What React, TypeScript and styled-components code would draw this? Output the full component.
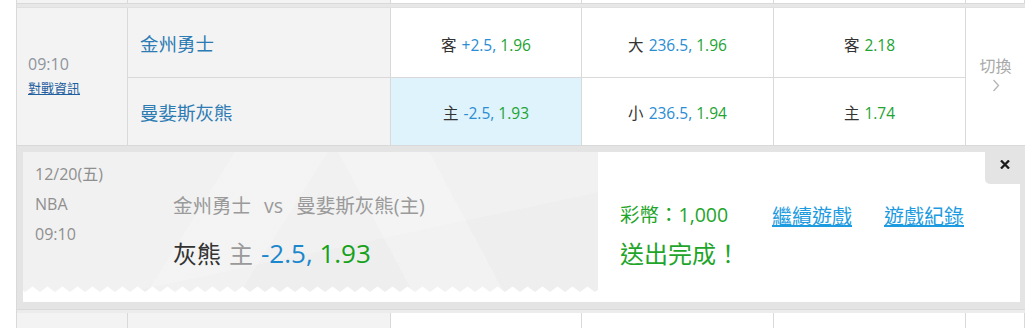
import React from "react";
import styled, { createGlobalStyle } from "styled-components";

const GlobalStyle = createGlobalStyle`
  html, body { margin: 0; padding: 0; background: #fff; overflow: hidden; }
  body { font-family: "Open Sans", "Noto Sans CJK TC", sans-serif; }
`;

const BORDER = "#d9d9d9";

const Page = styled.div`
  margin-left: 16px;
  width: 1009px;
  box-sizing: border-box;
  border-left: 1px solid ${BORDER};
`;

const Grid = styled.div<{ $rows: string }>`
  display: grid;
  grid-template-columns: 111px 263px 191px 192px 192px 1fr;
  grid-template-rows: ${(p) => p.$rows};
`;

const Cell = styled.div<{ $gray?: boolean; $noBottom?: boolean }>`
  box-sizing: border-box;
  background: ${(p) => (p.$gray ? "#f3f3f3" : "#fff")};
  border-right: 1px solid ${BORDER};
  border-bottom: ${(p) => (p.$noBottom ? "none" : `1px solid ${BORDER}`)};
`;

const Band = styled.div<{ $tone: string; $h: number }>`
  height: ${(p) => p.$h}px;
  background: ${(p) => p.$tone};
  border-top: 1px solid ${BORDER};
`;

const TimeCell = styled(Cell)`
  grid-row: span 2;
  display: flex;
  flex-direction: column;
  justify-content: center;
  padding-left: 11px;
  padding-bottom: 3px;
`;

const Time = styled.div`
  font-size: 16px;
  line-height: 20px;
  color: #8e959c;
`;

const InfoLink = styled.a`
  margin-top: 5px;
  font-size: 13px;
  line-height: 18px;
  color: #1f5f9e;
  text-decoration: underline;
  cursor: pointer;
  width: max-content;
`;

const TeamCell = styled(Cell)`
  display: flex;
  align-items: center;
  padding-left: 12px;
  font-size: 18.5px;
  color: #2d7bb3;
`;

const OddsCell = styled(Cell)<{ $selected?: boolean; $pad: number }>`
  display: flex;
  align-items: center;
  justify-content: center;
  padding-top: ${(p) => p.$pad}px;
  font-size: 15.5px;
  background: ${(p) => (p.$selected ? "#def3fc" : "#fff")};
`;

const Label = styled.span`
  color: #333;
  margin-right: 5px;
`;

const Blue = styled.span`
  color: #2a8dd4;
`;

const Green = styled.span`
  color: #22a332;
`;

const SwitchCell = styled(Cell)`
  grid-row: span 2;
  border-right: none;
  display: flex;
  flex-direction: column;
  align-items: center;
  justify-content: center;
  color: #a9a9a9;
  font-size: 16px;
  line-height: 22px;
  gap: 2px;
  padding-bottom: 6px;
`;

const Frame = styled.div`
  background: #e4e4e4;
  padding: 6px 5px 7px 6px;
`;

const Inner = styled.div`
  position: relative;
  background: #fff;
  height: 150px;
  display: flex;
  align-items: flex-start;
`;

const Ticket = styled.div`
  width: 575px;
  height: 140px;
  display: flex;
  flex-direction: column;
  background-color: #f1f1f1;
  background-image:
    linear-gradient(122deg, rgba(255,255,255,0) 0 32%, rgba(255,255,255,0.18) 32% 46%, rgba(255,255,255,0) 46%),
    linear-gradient(62deg, rgba(0,0,0,0) 0 60%, rgba(255,255,255,0.22) 60% 74%, rgba(0,0,0,0) 74%),
    linear-gradient(168deg, rgba(0,0,0,0) 0 62%, rgba(0,0,0,0.012) 62%);
`;

const TicketBody = styled.div`
  flex: 1;
  display: flex;
`;

const MetaCol = styled.div`
  width: 150px;
  padding: 7px 0 0 12px;
  box-sizing: border-box;
  font-size: 16px;
  line-height: 30px;
  color: #8f8f8f;
`;

const MatchCol = styled.div`
  padding-top: 39px;
`;

const Versus = styled.div`
  font-size: 19.5px;
  line-height: 30px;
  color: #9a9a9a;
  word-spacing: 8px;
`;

const Pick = styled.div`
  margin-top: 14px;
  font-size: 24px;
  line-height: 36px;
  color: #333;
`;

const Side = styled.span`
  color: #9a9a9a;
  margin: 0 8px 0 8px;
`;

const PickBlue = styled.span`
  color: #1b87cc;
  font-size: 26px;
`;

const PickGreen = styled.span`
  color: #15a11a;
  font-size: 26px;
`;

const Result = styled.div`
  flex: 1;
  display: flex;
  align-items: flex-start;
  padding: 48px 0 0 22px;
`;

const Status = styled.div`
  width: 152px;
  color: #1fa52a;
`;

const Coins = styled.div`
  font-size: 19.5px;
  line-height: 30px;
`;

const Done = styled.div`
  margin-top: 6px;
  font-size: 24px;
  line-height: 36px;
`;

const Links = styled.div`
  display: flex;
  gap: 32px;
  padding-top: 2px;
`;

const ActionLink = styled.a`
  font-size: 20px;
  line-height: 30px;
  color: #1d9be0;
  text-decoration: underline;
  cursor: pointer;
`;

const CloseButton = styled.button`
  position: absolute;
  top: 0;
  right: 0;
  width: 35px;
  height: 32px;
  border: none;
  padding: 8px 0 0 5px;
  box-sizing: border-box;
  background: #e4e4e4;
  border-bottom-left-radius: 5px;
  display: flex;
  align-items: flex-start;
  justify-content: center;
  cursor: pointer;
`;

const Zigzag = () => (
  <svg width="575" height="6" style={{ display: "block" }}>
    <defs>
      <pattern id="zz" width="15" height="6" patternUnits="userSpaceOnUse" x="2">
        <polygon points="0,6 7.5,0.5 15,6" fill="#fff" />
      </pattern>
    </defs>
    <rect width="575" height="6" fill="url(#zz)" />
  </svg>
);

const Chevron = () => (
  <svg width="8" height="13" viewBox="0 0 8 13">
    <polyline points="1.5,1 6.5,6.5 1.5,12" fill="none" stroke="#b5b5b5" strokeWidth="1.3" />
  </svg>
);

const CloseIcon = () => (
  <svg width="10" height="9" viewBox="0 0 10 9">
    <path d="M1 0.5 L9 8.5 M9 0.5 L1 8.5" stroke="#1c1c1c" strokeWidth="2.3" />
  </svg>
);

type Odds = { label: string; line?: string; price: string; selected?: boolean };

const row1: Odds[] = [
  { label: "客", line: "+2.5,", price: "1.96" },
  { label: "大", line: "236.5,", price: "1.96" },
  { label: "客", price: "2.18" },
];
const row2: Odds[] = [
  { label: "主", line: "-2.5,", price: "1.93", selected: true },
  { label: "小", line: "236.5,", price: "1.94" },
  { label: "主", price: "1.74" },
];

const OddsView = ({ o, pad }: { o: Odds; pad: number }) => (
  <OddsCell $selected={o.selected} $pad={pad}>
    <Label>{o.label}</Label>
    {o.line && <Blue>{o.line}&nbsp;</Blue>}
    <Green>{o.price}</Green>
  </OddsCell>
);

const StubRow = ({ h }: { h: number }) => (
  <Grid $rows={`${h}px`}>
    <Cell $gray $noBottom />
    <Cell $gray $noBottom />
    <Cell $noBottom />
    <Cell $noBottom />
    <Cell $noBottom />
    <Cell $noBottom />
  </Grid>
);

const MatchGrid = styled(Grid)`
  border-top: 1px solid #e0e0e0;
`;

export default function App() {
  return (
    <>
      <GlobalStyle />
      <Page>
        <StubRow h={3} />
        <Band $tone="#e7e7e7" $h={3} />
        <MatchGrid $rows="70px 68px">
          <TimeCell $gray>
            <Time>09:10</Time>
            <InfoLink>對戰資訊</InfoLink>
          </TimeCell>
          <TeamCell $gray>金州勇士</TeamCell>
          {row1.map((o, i) => (
            <OddsView key={i} o={o} pad={4} />
          ))}
          <SwitchCell>
            <span>切換</span>
            <Chevron />
          </SwitchCell>
          <TeamCell $gray>曼婓斯灰熊</TeamCell>
          {row2.map((o, i) => (
            <OddsView key={i} o={o} pad={2} />
          ))}
        </MatchGrid>
        <Frame>
          <Inner>
            <Ticket>
              <TicketBody>
                <MetaCol>
                  <div>12/20(五)</div>
                  <div>NBA</div>
                  <div>09:10</div>
                </MetaCol>
                <MatchCol>
                  <Versus>金州勇士 vs 曼婓斯灰熊(主)</Versus>
                  <Pick>
                    灰熊<Side>主</Side>
                    <PickBlue>-2.5, </PickBlue>
                    <PickGreen>1.93</PickGreen>
                  </Pick>
                </MatchCol>
              </TicketBody>
              <Zigzag />
            </Ticket>
            <Result>
              <Status>
                <Coins>彩幣：1,000</Coins>
                <Done>送出完成！</Done>
              </Status>
              <Links>
                <ActionLink>繼續遊戲</ActionLink>
                <ActionLink>遊戲紀錄</ActionLink>
              </Links>
            </Result>
            <CloseButton aria-label="close">
              <CloseIcon />
            </CloseButton>
          </Inner>
        </Frame>
        <Band $tone="#ececec" $h={3} />
        <StubRow h={20} />
      </Page>
    </>
  );
}
